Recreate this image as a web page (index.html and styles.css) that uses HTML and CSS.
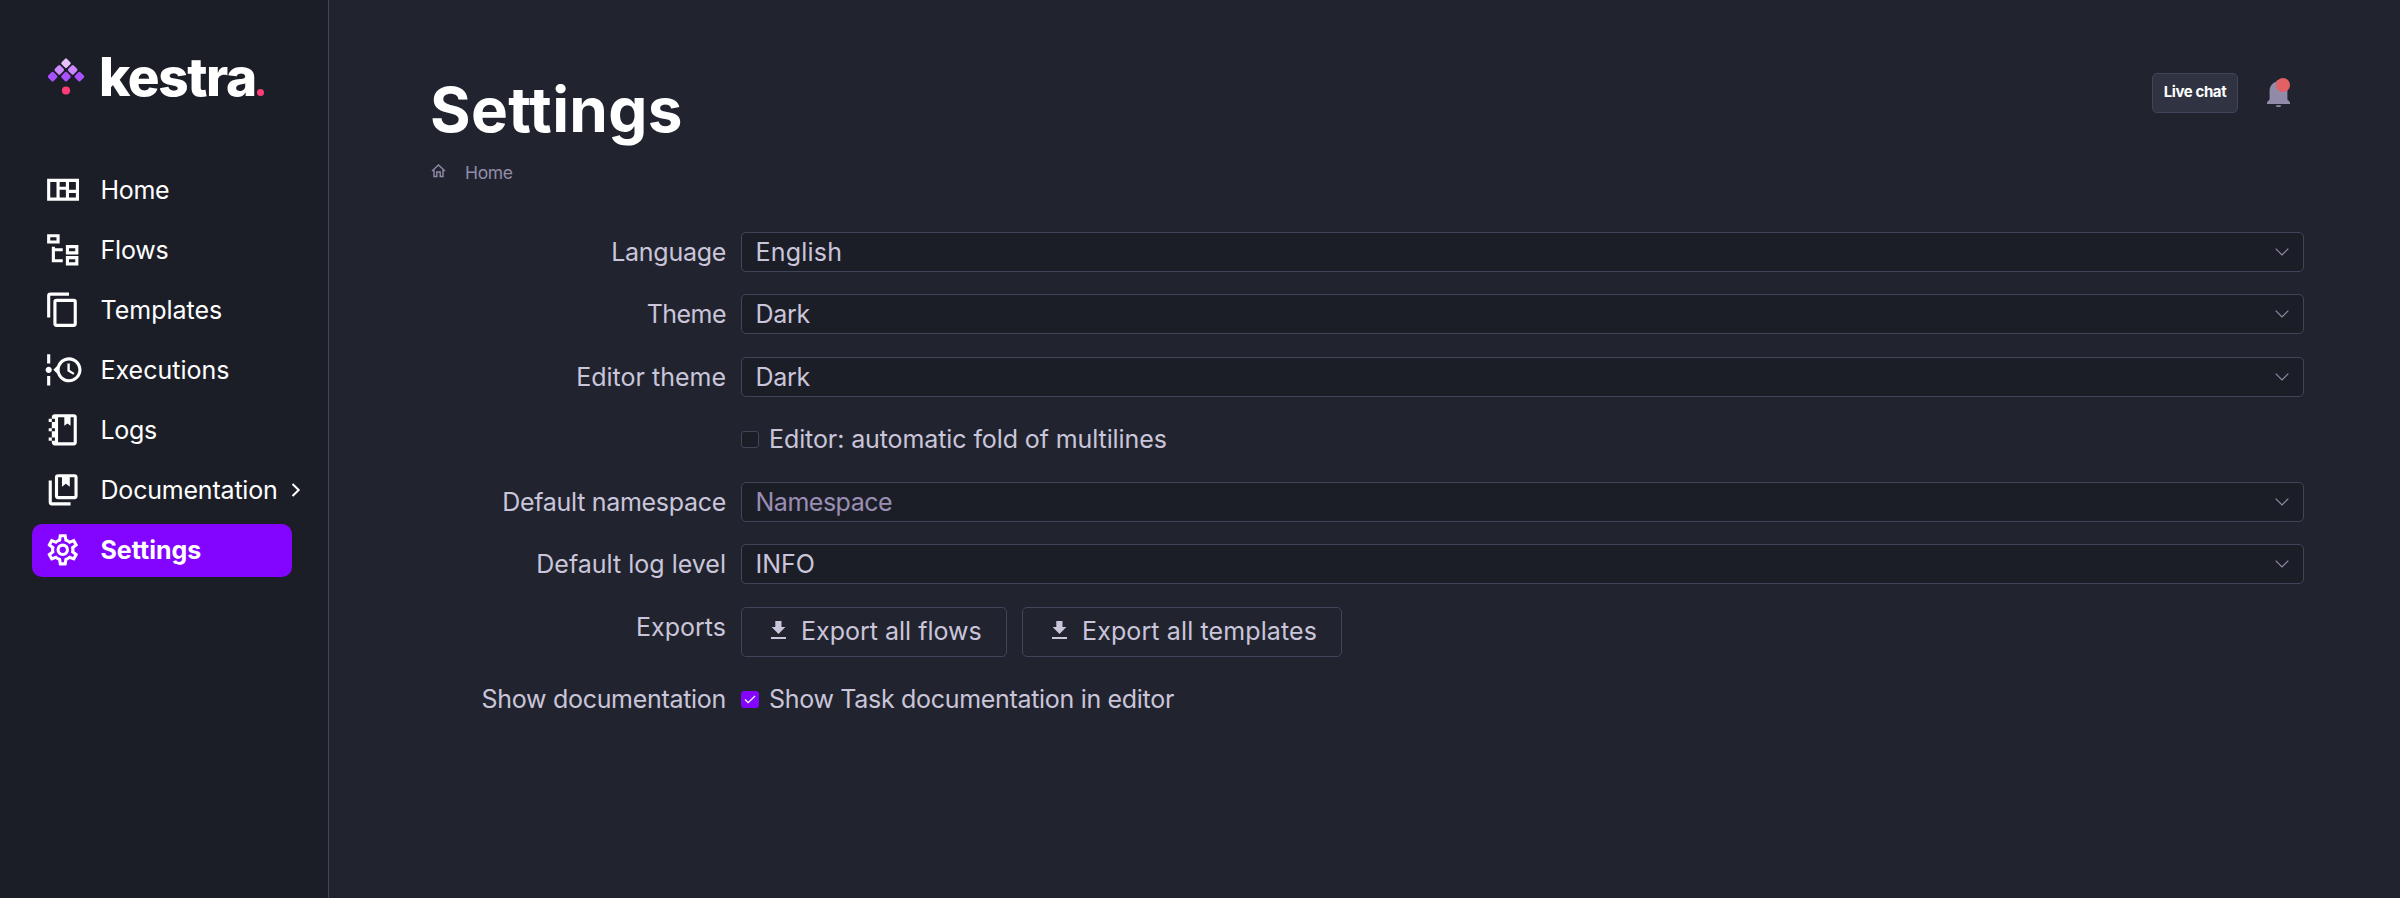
FILE: index.html
```
<!DOCTYPE html>
<html lang="en">
<head>
<meta charset="utf-8">
<title>Settings</title>
<link rel="stylesheet" href="styles.css">
</head>
<body>
<div class="app">
  <aside class="sidebar">
    <a class="logo">
      <svg class="logo-mark" width="38" height="40" viewBox="0 0 38 40">
        <g transform="translate(19 0)">
          <rect class="d1" x="-3.8" y="-3.8" width="7.6" height="7.6" rx="1.5" transform="translate(0 6.2) rotate(45)"/>
          <rect class="d2" x="-3.8" y="-3.8" width="7.6" height="7.6" rx="1.5" transform="translate(-6.7 12.9) rotate(45)"/>
          <rect class="d2" x="-3.8" y="-3.8" width="7.6" height="7.6" rx="1.5" transform="translate(6.7 12.9) rotate(45)"/>
          <rect class="d3" x="-3.8" y="-3.8" width="7.6" height="7.6" rx="1.5" transform="translate(-13.4 19.6) rotate(45)"/>
          <rect class="d3" x="-3.8" y="-3.8" width="7.6" height="7.6" rx="1.5" transform="translate(0 19.6) rotate(45)"/>
          <rect class="d3" x="-3.8" y="-3.8" width="7.6" height="7.6" rx="1.5" transform="translate(13.4 19.6) rotate(45)"/>
          <circle class="d4" cx="0" cy="33.5" r="4.1"/>
        </g>
      </svg>
      <span class="logo-text">kestra</span><span class="logo-dot"></span>
    </a>
    <nav class="nav">
      <a class="nav-item"><svg class="icon" viewBox="0 0 24 24"><path d="M2 5V19H22.400V5H2M4 7H8V17H4V7M10 7H14V10H10V7M10 12H14V17H10V12M16 7H20.400V12H16V7M16 14H20.400V17H16V14Z" fill-rule="evenodd"/></svg><span class="ls-home">Home</span></a>
      <a class="nav-item"><svg class="icon" viewBox="0 0 24 24"><path d="M12 13H7V18H12V20H5V10H7V11H12V13M8 4V6H4V4H8M10 2H2V8H10V2M20 11V13H16V11H20M22 9H14V15H22V9M20 18V20H16V18H20M22 16H14V22H22V16Z"/></svg><span class="ls-flows">Flows</span></a>
      <a class="nav-item"><svg class="icon" viewBox="0 0 24 24"><path d="M19,21H8V7H19M19,5H8A2,2 0 0,0 6,7V21A2,2 0 0,0 8,23H19A2,2 0 0,0 21,21V7A2,2 0 0,0 19,5M16,1H4A2,2 0 0,0 2,3V17H4V3H16V1Z"/></svg><span>Templates</span></a>
      <a class="nav-item"><svg class="icon" viewBox="0 0 24 24"><path d="M4 2V8H2V2H4M2 22V16H4V22H2M5 12C5 13.110 4.110 14 3 14C1.900 14 1 13.110 1 12C1 10.900 1.900 10 3 10C4.110 10 5 10.900 5 12M16 4C20.420 4 24 7.580 24 12C24 16.420 20.420 20 16 20C12.400 20 9.360 17.620 8.350 14.350L6 12L8.350 9.650C9.360 6.380 12.400 4 16 4M16 6C12.690 6 10 8.690 10 12C10 15.310 12.690 18 16 18C19.310 18 22 15.310 22 12C22 8.690 19.310 6 16 6M15 13V8H16.500V12.200L19.500 14L18.700 15.200L15 13Z"/></svg><span>Executions</span></a>
      <a class="nav-item"><svg class="icon" viewBox="0 0 24 24"><path d="M3 7V5H5V4A2 2 0 0 1 7 2H19A2 2 0 0 1 21 4V20A2 2 0 0 1 19 22H7A2 2 0 0 1 5 20V19H3V17H5V13H3V11H5V7H3M5 5V7H7V5H5M5 11V13H7V11H5M5 17V19H7V17H5M9 4V20H19V4H17V9.500L15 8L13 9.500V4H9Z" fill-rule="evenodd"/></svg><span class="ls-logs">Logs</span></a>
      <a class="nav-item"><svg class="icon" viewBox="0 0 24 24"><path d="M3 6H5V20H17V22H5A2 2 0 0 1 3 20V6M9 2H19.500A2 2 0 0 1 21.500 4V16A2 2 0 0 1 19.500 18H9A2 2 0 0 1 7 16V4A2 2 0 0 1 9 2M9 4V16H19.500V4H16.500V10L14 8.200L11.500 10V4H9Z" fill-rule="evenodd"/></svg><span class="ls-docs">Documentation</span><svg class="nav-arrow" width="10" height="14" viewBox="0 0 10 14"><path d="M1.500 1L7.700 7L1.500 13"/></svg></a>
      <a class="nav-item active"><svg class="icon" viewBox="0 0 24 24"><path d="M12,8A4,4 0 0,1 16,12A4,4 0 0,1 12,16A4,4 0 0,1 8,12A4,4 0 0,1 12,8M12,10A2,2 0 0,0 10,12A2,2 0 0,0 12,14A2,2 0 0,0 14,12A2,2 0 0,0 12,10M10,22C9.75,22 9.54,21.82 9.5,21.58L9.13,18.93C8.5,18.68 7.96,18.34 7.44,17.94L4.95,18.95C4.73,19.03 4.46,18.95 4.34,18.73L2.34,15.27C2.21,15.05 2.27,14.78 2.46,14.63L4.57,12.97L4.5,12L4.57,11L2.46,9.37C2.27,9.22 2.21,8.95 2.34,8.73L4.34,5.27C4.46,5.05 4.73,4.96 4.95,5.05L7.44,6.05C7.96,5.66 8.5,5.32 9.13,5.07L9.5,2.42C9.54,2.18 9.75,2 10,2H14C14.25,2 14.46,2.18 14.5,2.42L14.87,5.07C15.5,5.32 16.04,5.66 16.56,6.05L19.05,5.05C19.27,4.96 19.54,5.05 19.66,5.27L21.66,8.73C21.79,8.95 21.73,9.22 21.54,9.37L19.43,11L19.5,12L19.43,13L21.54,14.63C21.73,14.78 21.79,15.05 21.66,15.27L19.66,18.73C19.54,18.95 19.27,19.04 19.05,18.95L16.56,17.95C16.04,18.34 15.5,18.68 14.87,18.93L14.5,21.58C14.46,21.82 14.25,22 14,22H10M11.25,4L10.88,6.61C9.68,6.86 8.62,7.5 7.85,8.39L5.44,7.35L4.69,8.65L6.8,10.2C6.4,11.37 6.4,12.64 6.8,13.8L4.68,15.36L5.43,16.66L7.86,15.62C8.63,16.5 9.68,17.14 10.87,17.38L11.24,20H12.76L13.13,17.39C14.32,17.14 15.37,16.5 16.14,15.62L18.57,16.66L19.32,15.36L17.2,13.81C17.6,12.64 17.6,11.37 17.2,10.2L19.31,8.65L18.56,7.35L16.15,8.39C15.38,7.5 14.32,6.86 13.12,6.62L12.75,4H11.25Z"/></svg><span>Settings</span></a>
    </nav>
  </aside>
  <main class="main">
    <header class="top">
      <div>
        <h1 class="title">Settings</h1>
        <div class="crumbs"><svg width="15" height="14" viewBox="0 0 15 14"><path d="M1 7L7.500 1L14 7M3 6V12.500H5.800V8H9.200V12.500H12V6"/></svg><span>Home</span></div>
      </div>
      <div class="actions">
        <button class="chat">Live chat</button>
        <div class="bell"><svg width="23" height="27" viewBox="0 0 23 27"><path d="M0 24V22.300L2.600 19.500V11C2.600 5.800 5.800 2.600 9.300 1.800C9.500 -.6 13.500 -.6 13.700 1.800C17.200 2.600 20.400 5.800 20.400 11V19.500L23 22.300V24Z M9 25.200H14C13.800 28.500 9.200 28.500 9 25.200Z"/></svg><i class="bell-dot"></i></div>
      </div>
    </header>
    <form class="form">
      <label class="label ls-language">Language</label>
      <div class="select"><span class="ls-english">English</span><svg class="chev" viewBox="0 0 14 8"><path d="M.7.700L7 7L13.300.7"/></svg></div>
      <label class="label ls-theme">Theme</label>
      <div class="select"><span class="ls-dark">Dark</span><svg class="chev" viewBox="0 0 14 8"><path d="M.7.700L7 7L13.300.7"/></svg></div>
      <label class="label">Editor theme</label>
      <div class="select"><span class="ls-dark">Dark</span><svg class="chev" viewBox="0 0 14 8"><path d="M.7.700L7 7L13.300.7"/></svg></div>
      <span></span>
      <div class="check"><i class="box"></i><span class="ls-fold">Editor: automatic fold of multilines</span></div>
      <label class="label ls-ns">Default namespace</label>
      <div class="select placeholder"><span class="ls-nsv">Namespace</span><svg class="chev" viewBox="0 0 14 8"><path d="M.7.700L7 7L13.300.7"/></svg></div>
      <label class="label">Default log level</label>
      <div class="select"><span>INFO</span><svg class="chev" viewBox="0 0 14 8"><path d="M.7.700L7 7L13.300.7"/></svg></div>
      <label class="label ls-exports">Exports</label>
      <div class="buttons">
        <button type="button" class="btn flows"><svg width="15" height="18" viewBox="0 0 15 18"><path d="M4.300 0H10.500V6H14.400L7.500 13L.6 6H4.300ZM0 15.900H15V18H0Z"/></svg><span>Export all flows</span></button>
        <button type="button" class="btn templates"><svg width="15" height="18" viewBox="0 0 15 18"><path d="M4.300 0H10.500V6H14.400L7.500 13L.6 6H4.300ZM0 15.900H15V18H0Z"/></svg><span class="ls-tplbtn">Export all templates</span></button>
      </div>
      <label class="label ls-show">Show documentation</label>
      <div class="check"><i class="box on"><svg width="12" height="9" viewBox="0 0 12 9"><path d="M1 4.500L4.200 7.700L11 1"/></svg></i><span class="ls-task">Show Task documentation in editor</span></div>
    </form>
  </main>
</div>
</body>
</html>
```
FILE: styles.css
```
* { box-sizing: border-box; }
body {
  margin: 0;
  background: #21242e;
  color: #cac5da;
  font: 400 25px/40px Inter, "Liberation Sans", sans-serif;
}
h1 { margin: 0; }
svg { flex: none; }
button { font: inherit; color: inherit; margin: 0; }
.app { display: flex; height: 898px; overflow: hidden; }

.sidebar {
  width: 329px;
  flex: none;
  background: #1c1e27;
  border-right: 1px solid #404559;
  color: #fff;
}
.logo { display: flex; height: 160px; padding: 57px 0 0 47px; }
.logo-mark { flex: none; }
.logo-text {
  margin: -12px 0 0 14px;
  width: 158px;
  font-size: 53px;
  font-weight: 800;
  line-height: 64px;
  letter-spacing: -1.4px;
}
.logo-dot { width: 7px; height: 7px; margin: 32px 0 0 0; border-radius: 50%; background: #fd3c78; }
.d1 { fill: #e9c1ff; }
.d2 { fill: #cd88ff; }
.d3 { fill: #a950ff; }
.d4 { fill: #fd3c78; }

.nav { display: flex; flex-direction: column; gap: 7px; padding: 4px 36px 0 32px; }
.nav-item {
  display: flex;
  align-items: center;
  height: 53px;
  padding: 0 0 2px 12px;
  border-radius: 10px;
  white-space: nowrap;
}
.icon { width: 37.5px; height: 37.5px; margin-right: 19px; fill: #fff; }
.nav-item.active { background: #8405ff; font-weight: 700; }
.nav-arrow { margin-left: 13px; fill: none; stroke: #fff; stroke-width: 2; }

.main { flex: 1; padding: 73px 96px 0 101px; }
.top { display: flex; justify-content: space-between; height: 158.9px; }
.title { font-size: 62px; font-weight: 700; line-height: 74px; color: #fff; letter-spacing: .35px; }
.crumbs {
  display: flex;
  gap: 19px;
  padding: 17px 0 0 1px;
  font-size: 17.5px;
  line-height: 18px;
  letter-spacing: -.35px;
  color: #918ba9;
}
.crumbs svg { fill: none; stroke: #918ba9; stroke-width: 1.4; }
.actions { display: flex; padding-right: 14px; }
.chat {
  width: 86px;
  height: 40px;
  padding: 0 0 2px;
  border: 1px solid #404559;
  border-radius: 5px;
  background: #2f3342;
  color: #fff;
  font-size: 15px;
  font-weight: 700;
  line-height: 36px;
  letter-spacing: -.4px;
  white-space: nowrap;
}
.bell { position: relative; margin: 7px 0 0 29px; width: 23px; height: 28px; }
.bell svg { display: block; fill: #918ba9; }
.bell-dot {
  position: absolute;
  right: 0;
  top: -2px;
  width: 14px;
  height: 14px;
  border-radius: 50%;
  background: #e36065;
}

.form { display: grid; grid-template-columns: 296px 1563px; column-gap: 15px; row-gap: 22.5px; }
.label { text-align: right; white-space: nowrap; }
.select {
  display: flex;
  align-items: center;
  justify-content: space-between;
  height: 40px;
  padding: 0 14px 0 13.5px;
  border: 1px solid #404559;
  border-radius: 5px;
  background: #1c1e27;
}
.placeholder { color: #9a8eb4; }
.chev { width: 14px; height: 8px; fill: none; stroke: #918ba9; stroke-width: 1.2; }
.check { display: flex; align-items: center; height: 40px; white-space: nowrap; }
.box {
  display: flex;
  align-items: center;
  justify-content: center;
  width: 18px;
  height: 17px;
  margin-right: 10px;
  border: 1px solid #404559;
  border-radius: 3px;
  background: #1c1e27;
}
.box.on { background: #8405ff; border-color: #8405ff; }
.box svg { fill: none; stroke: #fff; stroke-width: 1.3; }
.buttons { display: flex; gap: 15px; }
.btn {
  display: flex;
  align-items: center;
  height: 50px;
  padding: 0 0 2px 29px;
  border: 1px solid #404559;
  border-radius: 5px;
  background: transparent;
  line-height: 48px;
  white-space: nowrap;
}
.btn svg { fill: #cac5da; margin: 0 15px 1px 0; }
.flows { width: 266px; }
.templates { width: 320px; }

/* optical letter spacing */
.ls-home { letter-spacing: -.32px; }
.ls-flows { letter-spacing: -.2px; }
.ls-logs { letter-spacing: -.32px; }
.ls-docs { letter-spacing: -.2px; }
.ls-language { letter-spacing: -.28px; }
.ls-theme { letter-spacing: -.55px; }
.ls-ns { letter-spacing: -.3px; }
.ls-show { letter-spacing: -.3px; }
.ls-english { letter-spacing: .2px; }
.ls-dark { letter-spacing: -.3px; }
.ls-nsv { letter-spacing: -.49px; }
.ls-tplbtn { letter-spacing: .12px; }
.ls-fold { letter-spacing: -.1px; }
.ls-task { letter-spacing: -.31px; }
```
